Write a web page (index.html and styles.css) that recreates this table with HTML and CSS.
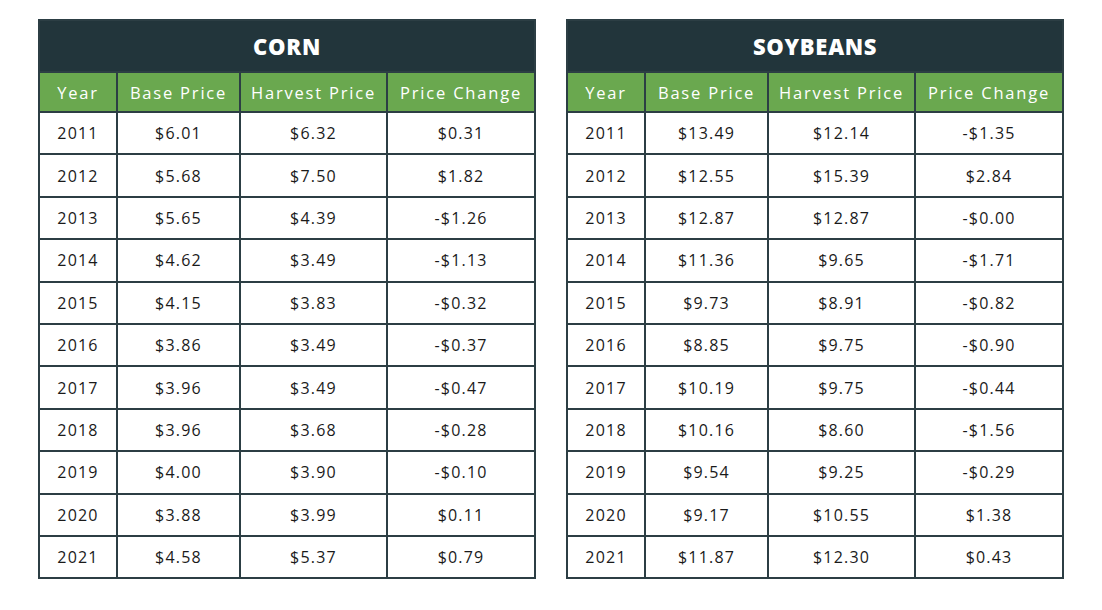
FILE: index.html
```html
<!DOCTYPE html>
<html>
<head>
<meta charset="utf-8">
<link rel="stylesheet" href="styles.css">
</head>
<body>
<div class="wrap">
  <table class="price-table">
    <colgroup><col class="c1"><col class="c2"><col class="c3"><col class="c4"></colgroup>
    <thead>
      <tr class="title-row"><th colspan="4">CORN</th></tr>
      <tr class="head-row"><th>Year</th><th>Base Price</th><th>Harvest Price</th><th>Price Change</th></tr>
    </thead>
    <tbody>
      <tr><td>2011</td><td>$6.01</td><td>$6.32</td><td>$0.31</td></tr>
      <tr><td>2012</td><td>$5.68</td><td>$7.50</td><td>$1.82</td></tr>
      <tr><td>2013</td><td>$5.65</td><td>$4.39</td><td>-$1.26</td></tr>
      <tr><td>2014</td><td>$4.62</td><td>$3.49</td><td>-$1.13</td></tr>
      <tr><td>2015</td><td>$4.15</td><td>$3.83</td><td>-$0.32</td></tr>
      <tr><td>2016</td><td>$3.86</td><td>$3.49</td><td>-$0.37</td></tr>
      <tr><td>2017</td><td>$3.96</td><td>$3.49</td><td>-$0.47</td></tr>
      <tr><td>2018</td><td>$3.96</td><td>$3.68</td><td>-$0.28</td></tr>
      <tr><td>2019</td><td>$4.00</td><td>$3.90</td><td>-$0.10</td></tr>
      <tr><td>2020</td><td>$3.88</td><td>$3.99</td><td>$0.11</td></tr>
      <tr><td>2021</td><td>$4.58</td><td>$5.37</td><td>$0.79</td></tr>
    </tbody>
  </table>
  <table class="price-table">
    <colgroup><col class="c1"><col class="c2"><col class="c3"><col class="c4"></colgroup>
    <thead>
      <tr class="title-row"><th colspan="4">SOYBEANS</th></tr>
      <tr class="head-row"><th>Year</th><th>Base Price</th><th>Harvest Price</th><th>Price Change</th></tr>
    </thead>
    <tbody>
      <tr><td>2011</td><td>$13.49</td><td>$12.14</td><td>-$1.35</td></tr>
      <tr><td>2012</td><td>$12.55</td><td>$15.39</td><td>$2.84</td></tr>
      <tr><td>2013</td><td>$12.87</td><td>$12.87</td><td>-$0.00</td></tr>
      <tr><td>2014</td><td>$11.36</td><td>$9.65</td><td>-$1.71</td></tr>
      <tr><td>2015</td><td>$9.73</td><td>$8.91</td><td>-$0.82</td></tr>
      <tr><td>2016</td><td>$8.85</td><td>$9.75</td><td>-$0.90</td></tr>
      <tr><td>2017</td><td>$10.19</td><td>$9.75</td><td>-$0.44</td></tr>
      <tr><td>2018</td><td>$10.16</td><td>$8.60</td><td>-$1.56</td></tr>
      <tr><td>2019</td><td>$9.54</td><td>$9.25</td><td>-$0.29</td></tr>
      <tr><td>2020</td><td>$9.17</td><td>$10.55</td><td>$1.38</td></tr>
      <tr><td>2021</td><td>$11.87</td><td>$12.30</td><td>$0.43</td></tr>
    </tbody>
  </table>
</div>
</body>
</html>
```
FILE: styles.css
```css
html, body {
  margin: 0;
  padding: 0;
  background: #ffffff;
}
.wrap {
  display: flex;
  align-items: flex-start;
  gap: 30px;
  padding: 19px 0 0 38px;
  font-family: "Open Sans", "Liberation Sans", sans-serif;
}
.price-table {
  border-collapse: collapse;
  width: 496px;
  table-layout: fixed;
  border: 2px solid #2c3e44;
}
.c1 { width: 78px; }
.c2 { width: 123px; }
.c3 { width: 147px; }
.c4 { width: 148px; }
.price-table th,
.price-table td {
  border: 2px solid #2c3e44;
  text-align: center;
  padding: 0;
}
.title-row th {
  background: #22353b;
  color: #ffffff;
  height: 50px;
  font-size: 22px;
  font-weight: 800;
  letter-spacing: 0.7px;
}
.head-row th {
  background: #6aa84f;
  color: #ffffff;
  height: 38px;
  font-size: 16.5px;
  font-weight: 400;
  letter-spacing: 1.8px;
}
.price-table td {
  height: 40.4px;
  font-size: 16px;
  color: #1a1a1a;
  letter-spacing: 1.2px;
}
```
